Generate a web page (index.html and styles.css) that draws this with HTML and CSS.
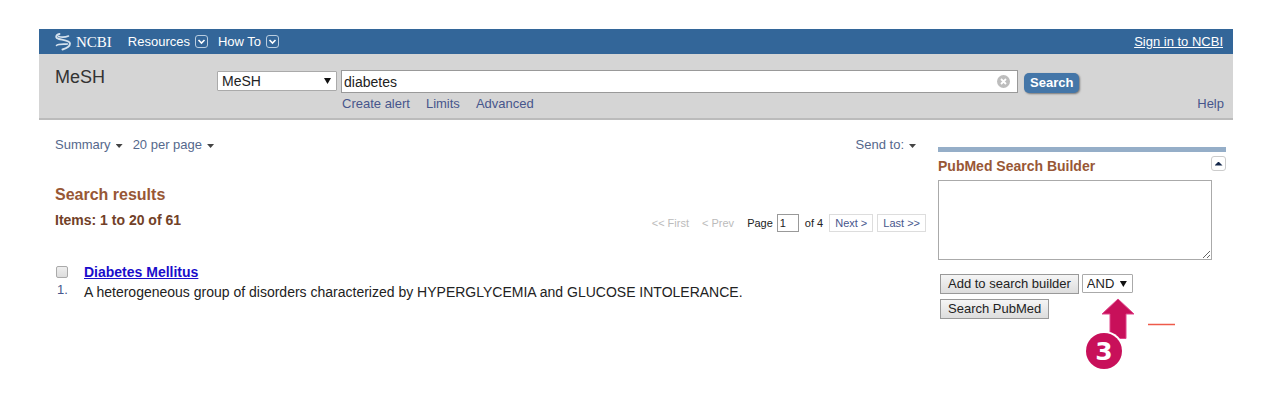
FILE: index.html
```html
<!DOCTYPE html>
<html lang="en">
<head>
  <meta charset="UTF-8" />
  <meta name="viewport" content="width=device-width, initial-scale=1.0"/>
  <title>diabetes - MeSH - NCBI</title>
  <link rel="stylesheet" href="styles.css">
</head>
<body>
  <header class="topbar">
    <a class="logo" href="#">
      <svg width="16" height="18" viewBox="0 0 16 18" fill="none" stroke="#d5e2ee" stroke-linecap="round">
        <path d="M4.500 1C0.500 2 0 5 4 6C8 7 15 7.500 15 10.500C15 13.500 11 15.500 7.500 16.500" stroke-width="1.900"/>
        <path d="M3.500 3.500C7 4.500 11 4 13.500 3" stroke-width="1.600"/>
        <path d="M1.500 12.500C3.500 10.500 9 11.500 12.500 11" stroke-width="1.600"/>
      </svg>
      NCBI
    </a>
    <nav class="topnav">
      <a href="#">Resources
        <svg width="13" height="13" viewBox="0 0 13 13" fill="none" stroke="#fff"><rect x="0.500" y="0.500" width="12" height="12" rx="2.500" stroke="#b9cde0"/><path d="M3.500 5L6.500 8L9.500 5" stroke-width="1.600"/></svg>
      </a>
      <a href="#">How To
        <svg width="13" height="13" viewBox="0 0 13 13" fill="none" stroke="#fff"><rect x="0.500" y="0.500" width="12" height="12" rx="2.500" stroke="#b9cde0"/><path d="M3.500 5L6.500 8L9.500 5" stroke-width="1.600"/></svg>
      </a>
    </nav>
    <a class="signin" href="#">Sign in to NCBI</a>
  </header>

  <form class="search">
    <h1>MeSH</h1>
    <span class="select db">
      <select aria-label="Database"><option>MeSH</option></select>
    </span>
    <div class="query">
      <div class="term">
        <input type="text" value="diabetes" aria-label="Search term" />
        <button type="button" class="clear" aria-label="Clear input">
          <svg width="13" height="13" viewBox="0 0 13 13"><circle cx="6.500" cy="6.500" r="6.500" fill="#bdbdbd"/><path d="M4 4L9 9M9 4L4 9" stroke="#fff" stroke-width="1.800"/></svg>
        </button>
      </div>
      <div class="links">
        <a href="#">Create alert</a>
        <a href="#">Limits</a>
        <a href="#">Advanced</a>
      </div>
    </div>
    <button type="submit" class="go">Search</button>
    <a class="help" href="#">Help</a>
  </form>

  <div class="content">
    <main>
      <div class="display">
        <a class="menu" href="#">Summary</a>
        <a class="menu" href="#">20 per page</a>
        <a class="menu send" href="#">Send to:</a>
      </div>

      <h2>Search results</h2>
      <div class="count">
        <h3>Items: 1 to 20 of 61</h3>
        <div class="pager">
          <span class="off">&lt;&lt; First</span>
          <span class="off">&lt; Prev</span>
          <label for="pageno">Page</label>
          <input type="text" id="pageno" value="1" />
          <span class="of">of 4</span>
          <a href="#">Next &gt;</a>
          <a href="#">Last &gt;&gt;</a>
        </div>
      </div>

      <div class="result">
        <div class="num">
          <input type="checkbox" id="r1" />
          <label for="r1">1.</label>
        </div>
        <div>
          <a class="title" href="#">Diabetes Mellitus</a>
          <p>A heterogeneous group of disorders characterized by HYPERGLYCEMIA and GLUCOSE INTOLERANCE.</p>
        </div>
      </div>
    </main>

    <aside>
      <div class="builder-head">
        <label for="builder">PubMed Search Builder</label>
        <button type="button" class="collapse" aria-label="Collapse"></button>
      </div>
      <textarea id="builder"></textarea>
      <div class="actions">
        <div class="row">
          <button type="button">Add to search builder</button>
          <span class="select op">
            <select aria-label="Operator"><option>AND</option></select>
            <!-- step marker pointing at the operator -->
            <svg class="step" width="92" height="72" viewBox="0 0 92 72">
              <path d="M33 1L49 16H41V40.500H25V16H17Z" fill="#c8105a" stroke="#e0448a"/>
              <circle cx="19" cy="53" r="20" fill="#fff"/>
              <circle cx="19" cy="53" r="18" fill="#c8105a"/>
              <text x="19" y="62" text-anchor="middle">3</text>
              <path d="M63 26.500H90" stroke="#ee5a4a" stroke-width="1.500"/>
            </svg>
          </span>
        </div>
        <div class="row">
          <button type="button">Search PubMed</button>
        </div>
      </div>
    </aside>
  </div>
</body>
</html>
```

FILE: styles.css
```css
* {
  box-sizing: border-box;
}

body {
  margin: 29px 31px 0 39px;
  font: 13px/16px "Liberation Sans", Arial, sans-serif;
  color: #222;
  background: #fff;
}

a {
  color: #47568c;
  text-decoration: none;
}

h1, h2, h3, p {
  margin: 0;
}

input, select, button, textarea {
  font: inherit;
  color: #222;
}

/* top bar */
.topbar {
  display: flex;
  align-items: center;
  height: 25px;
  padding: 0 10px 0 16px;
  background: #336699;
}

.topbar a {
  color: #fff;
}

.topbar .logo {
  display: flex;
  align-items: center;
  gap: 5px;
  font: 15px/20px "Liberation Serif", "Times New Roman", serif;
}

.topnav {
  display: flex;
  gap: 10px;
  margin-left: 16px;
}

.topnav a {
  display: flex;
  align-items: center;
  gap: 5px;
}

.topbar .signin {
  margin-left: auto;
  text-decoration: underline;
}

/* search band */
.search {
  display: flex;
  align-items: flex-start;
  height: 66px;
  padding: 16px 9px 0 16px;
  background: #d5d5d5;
  border-bottom: 2px solid #bbb;
}

.search h1 {
  width: 162px;
  font-size: 18px;
  line-height: 14px;
  font-weight: normal;
  color: #333;
}

.select {
  position: relative;
  display: block;
}

.select select {
  appearance: none;
  display: block;
  width: 100%;
  height: 100%;
  padding: 0 4px;
  border: 1px solid #aaa;
  background: #fff;
  border-radius: 1px;
}

.select::after {
  content: "";
  position: absolute;
  top: 7px;
  right: 6px;
  width: 7px;
  height: 6px;
  background: #111;
  clip-path: polygon(0 0, 100% 0, 50% 100%);
  pointer-events: none;
}

.db {
  width: 120px;
  height: 20px;
  margin: 1px 4px 0 0;
  font-size: 14px;
}

.query {
  flex: 1;
  max-width: 677px;
}

.term {
  display: flex;
  align-items: center;
  height: 23px;
  padding-right: 7px;
  background: #fff;
  border: 1px solid #999;
}

.term input {
  flex: 1;
  min-width: 0;
  height: 21px;
  padding: 0 2px;
  border: 0;
  outline: 0;
  background: none;
  font-size: 14px;
}

.clear {
  display: flex;
  padding: 0;
  border: 0;
  background: none;
}

.links {
  display: flex;
  gap: 16px;
  padding: 3px 1px;
}

.go {
  height: 20px;
  margin: 3px 0 0 6px;
  padding: 0 6px;
  border: 0;
  border-radius: 5px;
  background: #4476a8;
  box-shadow: 1px 1px 2px #777;
  color: #fff;
  font-weight: bold;
}

.help {
  margin: 26px 0 0 auto;
}

/* content columns */
.content {
  display: grid;
  grid-template-columns: 1fr 288px;
  gap: 12px;
  padding: 17px 7px 64px 16px;
}

.display {
  display: flex;
  gap: 10px;
}

.menu {
  color: #55688c;
}

.menu::after {
  content: "";
  display: inline-block;
  width: 7px;
  height: 4px;
  margin-left: 5px;
  vertical-align: 1px;
  background: #444;
  clip-path: polygon(0 0, 100% 0, 50% 100%);
}

.send {
  margin: 0 10px 0 auto;
}

h2 {
  margin-top: 32px;
  font-size: 16px;
  line-height: 20px;
  color: #985735;
}

.count {
  display: flex;
  justify-content: space-between;
  margin-top: 5px;
}

h3 {
  font-size: 14px;
  line-height: 20px;
  color: #724128;
}

.pager {
  display: flex;
  align-items: center;
  margin-top: 4px;
  font-size: 11px;
}

.pager .off {
  margin-right: 13px;
  color: #bbb;
}

.pager input {
  width: 22px;
  height: 18px;
  margin: 0 6px 0 4px;
  padding: 0 2px;
  border: 1px solid #999;
}

.pager a {
  height: 18px;
  margin-left: 4px;
  padding: 0 5px;
  border: 1px solid #ddd;
}

.pager .of {
  margin-right: 2px;
}

.result {
  display: flex;
  margin-top: 30px;
  font-size: 14px;
  line-height: 20px;
}

.num {
  display: flex;
  flex-direction: column;
  width: 29px;
}

.num input {
  appearance: none;
  width: 12px;
  height: 12px;
  margin: 4px 0 2px 1px;
  border: 1px solid #aaa;
  border-radius: 2px;
  background: linear-gradient(#eee, #ddd);
}

.num label {
  padding-left: 2px;
  font-size: 13px;
  color: #47568c;
}

.title {
  color: #1a0dcb;
  font-weight: bold;
  text-decoration: underline;
}

/* search builder */
aside {
  margin-top: 10px;
  border-top: 5px solid #95aec8;
}

.builder-head {
  display: flex;
  justify-content: space-between;
  height: 28px;
  padding-top: 4px;
}

.builder-head label {
  font-size: 14px;
  line-height: 20px;
  font-weight: bold;
  color: #985735;
}

.collapse {
  display: flex;
  align-items: center;
  justify-content: center;
  width: 15px;
  height: 15px;
  padding: 0;
  border: 1px solid #ccc;
  border-radius: 3px;
  background: #fff;
}

.collapse::before {
  content: "";
  width: 8px;
  height: 4px;
  background: #14284b;
  clip-path: polygon(50% 0, 100% 100%, 0 100%);
}

textarea {
  display: block;
  width: calc(100% - 14px);
  height: 80px;
  border: 1px solid #aaa;
}

.actions {
  display: flex;
  flex-direction: column;
  gap: 5px;
  padding: 14px 2px 0;
}

.row {
  display: flex;
  gap: 3px;
}

.row button {
  height: 20px;
  padding: 0 7px;
  border: 1px solid #999;
  background: linear-gradient(#f5f5f5, #ddd);
}

.op {
  width: 51px;
  height: 19px;
}

.step {
  position: absolute;
  top: 24px;
  left: 3px;
  z-index: 1;
  pointer-events: none;
}

.step text {
  font: bold 25px "DejaVu Sans", Verdana, sans-serif;
  fill: #fff;
}
```
